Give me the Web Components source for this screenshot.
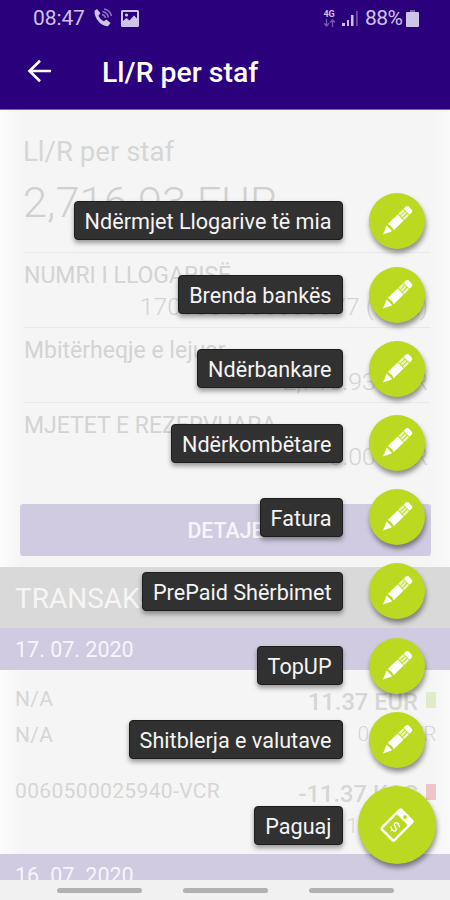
<!DOCTYPE html>
<html lang="sq">
<head>
<meta charset="utf-8">
<title>Ll/R per staf</title>
<style>
  html, body { margin: 0; height: 100%; }
  body {
    font-family: Roboto, "Liberation Sans", sans-serif;
    overflow: hidden;
  }
</style>
</head>
<body>
<bank-app></bank-app>

<script>
class StatusBar extends HTMLElement {
  constructor() {
    super();
    this.shadow = this.attachShadow({ mode: 'open' });
  }

  connectedCallback() {
    this.shadow.innerHTML = `
    <style>
      :host {
        display: flex;
        align-items: center;
        height: 36px;
        padding: 0 31px 0 33px;
        box-sizing: border-box;
        background: #2a007c;
        color: #cfc3e8;
        font-size: 21px;
        line-height: 36px;
      }
      .time { width: 53px; letter-spacing: -0.1px; }
      .phone { margin-left: 7px; }
      .photo { margin-left: 8px; }
      .space { flex: 1; }
      .net {
        display: flex;
        flex-direction: column;
        align-items: center;
        width: 14px;
        font-size: 9px;
        font-weight: 700;
        line-height: 9px;
        letter-spacing: -0.2px;
      }
      .signal { margin: 0 7px 0 6px; }
      .percent { width: 39px; letter-spacing: -0.5px; }
      .battery { margin-left: 2px; }
      svg { display: block; }
    </style>
    <span class="time">08:47</span>
    <svg class="phone" width="20" height="20" viewBox="0 0 20 20" fill="currentColor">
      <path d="M1.500 2.800 4 1l3.400 4.300-2 2.500c1.200 2.600 3 4.300 5.500 5.400l2.500-1.800L17.500 15 15 18.200C8 18.700 1 10 1.500 2.800z"/>
      <g fill="none" stroke="currentColor" stroke-width="1.500" opacity=".6">
        <path d="M9 6.500q3 .5 3.500 3.500M9.500 3.500q5 1 6 6M11 1q6 1 7.500 7"/>
      </g>
    </svg>
    <svg class="photo" width="18" height="17" viewBox="0 0 18 17" fill="currentColor">
      <path fill-rule="evenodd" d="M1.500 0h15q1.500 0 1.500 1.500v14q0 1.500-1.500 1.500h-15Q0 17 0 15.500v-14Q0 0 1.500 0zM2 2v9l3.500-3 3 2.500 4.500-5 3 3V2z"/>
      <circle cx="5.500" cy="5" r="1.600"/>
    </svg>
    <span class="space"></span>
    <span class="net">4G
      <svg width="13" height="8" viewBox="0 0 13 8" fill="none" stroke="currentColor" stroke-width="1.300" opacity=".45">
        <path d="M3.500 0v7M1 4.200 3.500 7 6 4.200M9.500 8V1M7 3.500 9.500 1 12 3.500"/>
      </svg>
    </span>
    <svg class="signal" width="16" height="17" viewBox="0 0 16 17" fill="currentColor">
      <path d="M0 13h3v3H0zM5 10h2v6H5zM9 5h2.500v11H9z"/>
      <path d="M14 1h1.800v15H14z" opacity=".4"/>
    </svg>
    <span class="percent">88%</span>
    <svg class="battery" width="13" height="17" viewBox="0 0 13 17" fill="currentColor">
      <path d="M4 0h5v2H4z" opacity=".5"/>
      <path d="M1 2h11q1 0 1 1v13q0 1-1 1H1q-1 0-1-1V3q0-1 1-1z"/>
    </svg>
    `;
  }
}

class AppBar extends HTMLElement {
  constructor() {
    super();
    this.shadow = this.attachShadow({ mode: 'open' });
  }

  connectedCallback() {
    this.shadow.innerHTML = `
    <style>
      :host {
        display: flex;
        align-items: center;
        height: 74px;
        padding: 0 27px;
        box-sizing: border-box;
        background: #2a007c;
        border-bottom: 1px solid #7468b4;
        color: #fff;
      }
      svg { width: 25px; margin-right: 50px; margin-top: -3px; }
      .title { font-size: 28.4px; font-weight: 500; line-height: 73px; white-space: nowrap; }
    </style>
    <svg width="25" height="24" viewBox="0 0 25 24" fill="none" stroke="#fff" stroke-width="2.600">
      <path d="M24 12H2.500M13 1.800 2.500 12 13 22.200"/>
    </svg>
    <span class="title"><slot></slot></span>
    `;
  }
}

class AccountField extends HTMLElement {
  constructor() {
    super();
    this.shadow = this.attachShadow({ mode: 'open' });
  }

  connectedCallback() {
    this.shadow.innerHTML = `
    <style>
      :host {
        display: block;
        height: 75px;
        margin: 0 20px 0 24px;
        padding-top: 8px;
        box-sizing: border-box;
        border-top: 1px solid #e9e9e9;
        color: #d3d3d3;
        white-space: nowrap;
      }
      .label { font-size: 23px; line-height: 29px; }
      .value {
        font-size: 24.8px;
        font-weight: 300;
        line-height: 32px;
        padding-right: 2px;
        text-align: right;
        margin-top: 1px;
      }
    </style>
    <div class="label"><slot></slot></div>
    <div class="value"><slot name="value"></slot></div>
    `;
  }
}

class DateBar extends HTMLElement {
  constructor() {
    super();
    this.shadow = this.attachShadow({ mode: 'open' });
  }

  connectedCallback() {
    this.shadow.innerHTML = `
    <style>
      :host {
        display: block;
        height: 42px;
        padding-left: 15px;
        background: #d1cbe2;
        color: #f7f5fb;
        font-size: 21.5px;
        line-height: 43px;
      }
    </style>
    <slot></slot>
    `;
  }
}

class TransactionRow extends HTMLElement {
  constructor() {
    super();
    this.shadow = this.attachShadow({ mode: 'open' });
  }

  connectedCallback() {
    this.shadow.innerHTML = `
    <style>
      :host {
        display: flex;
        justify-content: space-between;
        height: 92px;
        padding: 11px 14px 0 15px;
        box-sizing: border-box;
        color: #d6d6d6;
        white-space: nowrap;
      }
      .names { font-size: 21px; line-height: 36px; letter-spacing: 0.35px; }
      .sums { text-align: right; }
      .amount {
        display: flex;
        align-items: center;
        justify-content: flex-end;
        gap: 8px;
        font-size: 23.7px;
        font-weight: 500;
        line-height: 42px;
      }
      .mark { width: 10px; height: 16px; background: var(--mark, #dfebc9); margin-top: -4px; }
      .balance { font-size: 21px; font-weight: 300; line-height: 22px; letter-spacing: -0.7px; }
    </style>
    <div class="names">
      <div><slot name="from"></slot></div>
      <div><slot name="to"></slot></div>
    </div>
    <div class="sums">
      <div class="amount"><slot name="amount"></slot><span class="mark"></span></div>
      <div class="balance"><slot name="balance"></slot></div>
    </div>
    `;
  }
}

class DialAction extends HTMLElement {
  constructor() {
    super();
    this.shadow = this.attachShadow({ mode: 'open' });
  }

  connectedCallback() {
    const pencil = `
      <svg width="30" height="30" viewBox="0 0 30 30" fill="#fff">
        <g transform="rotate(-44 15 15)">
          <path d="M-4.500 15 4.500 11v8z"/>
          <path d="M6.300 10.700H20v8.600H6.300q1.500-4.300 0-8.600z"/>
          <path d="M21 10.700h6.500v8.600H21z" opacity=".75"/>
          <path d="M28.300 10.700H31q2.500 0 2.500 2.500v3.600q0 2.500-2.500 2.500h-2.700z"/>
          <path d="M21 13.500h6.500M21 16.500h6.500" stroke="#bcd922" stroke-width="1"/>
        </g>
      </svg>`;
    const phone = `
      <svg width="38" height="38" viewBox="0 0 38 38">
        <g transform="rotate(45 19 19)">
          <path fill="#fff" fill-rule="evenodd" d="M11.500 4h15q2.500 0 2.500 2.500v25q0 2.500-2.500 2.500h-15Q9 34 9 31.500v-25Q9 4 11.500 4zM11.400 11.500v20h15.200v-20z"/>
          <circle cx="19" cy="7.800" r="1.900" fill="#bcd922"/>
          <path fill="none" stroke="#fff" stroke-width="1.300" d="M22.300 19q-1-1.500-3.300-1.500-2.800 0-2.800 2 0 1.600 2.800 2 3.100.5 3.100 2.300 0 1.900-3.100 1.900-2.500 0-3.500-1.600M19 16v1.500M19 25.700v1.600"/>
        </g>
      </svg>`;
    const main = this.hasAttribute('main');
    this.shadow.innerHTML = `
    <style>
      :host {
        display: flex;
        align-items: center;
        justify-content: flex-end;
        gap: 15px;
      }
      .label {
        height: 39px;
        padding: 0 10.5px 0 10px;
        box-sizing: border-box;
        border-radius: 4px;
        background: #313131;
        border: 1px solid #1d1d1d;
        box-shadow: 0 3px 5px rgba(0, 0, 0, .38);
        color: #f4f4f4;
        font-size: 21.6px;
        line-height: 39px;
        white-space: nowrap;
      }
      .holder { display: flex; justify-content: center; width: 78px; }
      .fab {
        display: flex;
        align-items: center;
        justify-content: center;
        width: 56px;
        height: 56px;
        border-radius: 50%;
        background: #bcd922;
        box-shadow: 1px 4px 5px rgba(0, 0, 0, .42);
      }
      :host([main]) .fab { width: 78px; height: 78px; }
      svg { display: block; overflow: visible; }
    </style>
    <span class="label"><slot></slot></span>
    <span class="holder"><span class="fab">${main ? phone : pencil}</span></span>
    `;
  }
}

class SpeedDial extends HTMLElement {
  constructor() {
    super();
    this.shadow = this.attachShadow({ mode: 'open' });
  }

  connectedCallback() {
    this.shadow.innerHTML = `
    <style>
      :host {
        position: absolute;
        right: 14px;
        bottom: 36px;
        display: flex;
        flex-direction: column;
        gap: 18.2px;
      }
    </style>
    <slot></slot>
    `;
  }
}

class NavBar extends HTMLElement {
  constructor() {
    super();
    this.shadow = this.attachShadow({ mode: 'open' });
  }

  connectedCallback() {
    this.shadow.innerHTML = `
    <style>
      :host {
        display: flex;
        justify-content: center;
        align-items: center;
        gap: 41px;
        height: 20px;
        background: #f1f1f1;
      }
      span { width: 85px; height: 5px; border-radius: 3px; background: #b1b1b1; }
    </style>
    <span></span><span></span><span></span>
    `;
  }
}

class BankApp extends HTMLElement {
  constructor() {
    super();
    this.shadow = this.attachShadow({ mode: 'open' });
  }

  connectedCallback() {
    this.shadow.innerHTML = `
    <style>
      :host {
        position: relative;
        display: flex;
        flex-direction: column;
        width: 450px;
        height: 900px;
        overflow: hidden;
      }
      main {
        flex: 1;
        min-height: 0;
        overflow: hidden;
        background: linear-gradient(to right, #fcfcfc, #f5f5f5 22px, #f5f5f5 430px, #f9f9f9);
      }
      .account { height: 142px; padding: 24px 24px 0 23px; box-sizing: border-box; color: #d6d6d6; white-space: nowrap; }
      .name { font-size: 27.6px; line-height: 35px; }
      .total { font-size: 43.4px; font-weight: 300; line-height: 50px; margin-top: 9px; color: #d0d0d0; }
      .details {
        height: 52px;
        margin: 27px 19px 11px 20px;
        border-radius: 3px;
        background: #d1cbe2;
        color: #f7f5fb;
        font-size: 21.3px;
        font-weight: 500;
        line-height: 54px;
        text-align: center;
      }
      .heading {
        height: 61px;
        padding-left: 15px;
        background: #d9d9d9;
        color: #f5f5f5;
        font-size: 28px;
        line-height: 64px;
      }
      .out { --mark: #edc4c8; }
    </style>
    <status-bar></status-bar>
    <app-bar>Ll/R per staf</app-bar>
    <main>
      <div class="account">
        <div class="name">Ll/R per staf</div>
        <div class="total">2,716.93 EUR</div>
      </div>
      <account-field>NUMRI I LLOGARISË<span slot="value">1701001000000077 (EUR)</span></account-field>
      <account-field>Mbitërheqje e lejuar<span slot="value">2,716.93 EUR</span></account-field>
      <account-field>MJETET E REZERVUARA<span slot="value">0.00 EUR</span></account-field>
      <div class="details">DETAJE</div>
      <div class="heading">TRANSAKSIONET</div>
      <date-bar>17. 07. 2020</date-bar>
      <transaction-row>
        <span slot="from">N/A</span>
        <span slot="to">N/A</span>
        <span slot="amount">11.37 EUR</span>
        <span slot="balance">0.00 EUR</span>
      </transaction-row>
      <transaction-row class="out">
        <span slot="from">0060500025940-VCR</span>
        <span slot="amount">-11.37 KGS</span>
        <span slot="balance">111.37 EUR</span>
      </transaction-row>
      <date-bar>16. 07. 2020</date-bar>
    </main>
    <nav-bar></nav-bar>
    <speed-dial>
      <dial-action>Ndërmjet Llogarive të mia</dial-action>
      <dial-action>Brenda bankës</dial-action>
      <dial-action>Ndërbankare</dial-action>
      <dial-action>Ndërkombëtare</dial-action>
      <dial-action>Fatura</dial-action>
      <dial-action>PrePaid Shërbimet</dial-action>
      <dial-action>TopUP</dial-action>
      <dial-action>Shitblerja e valutave</dial-action>
      <dial-action main>Paguaj</dial-action>
    </speed-dial>
    `;
  }
}

customElements.define('status-bar', StatusBar);
customElements.define('app-bar', AppBar);
customElements.define('account-field', AccountField);
customElements.define('date-bar', DateBar);
customElements.define('transaction-row', TransactionRow);
customElements.define('dial-action', DialAction);
customElements.define('speed-dial', SpeedDial);
customElements.define('nav-bar', NavBar);
customElements.define('bank-app', BankApp);
</script>
</body>
</html>
